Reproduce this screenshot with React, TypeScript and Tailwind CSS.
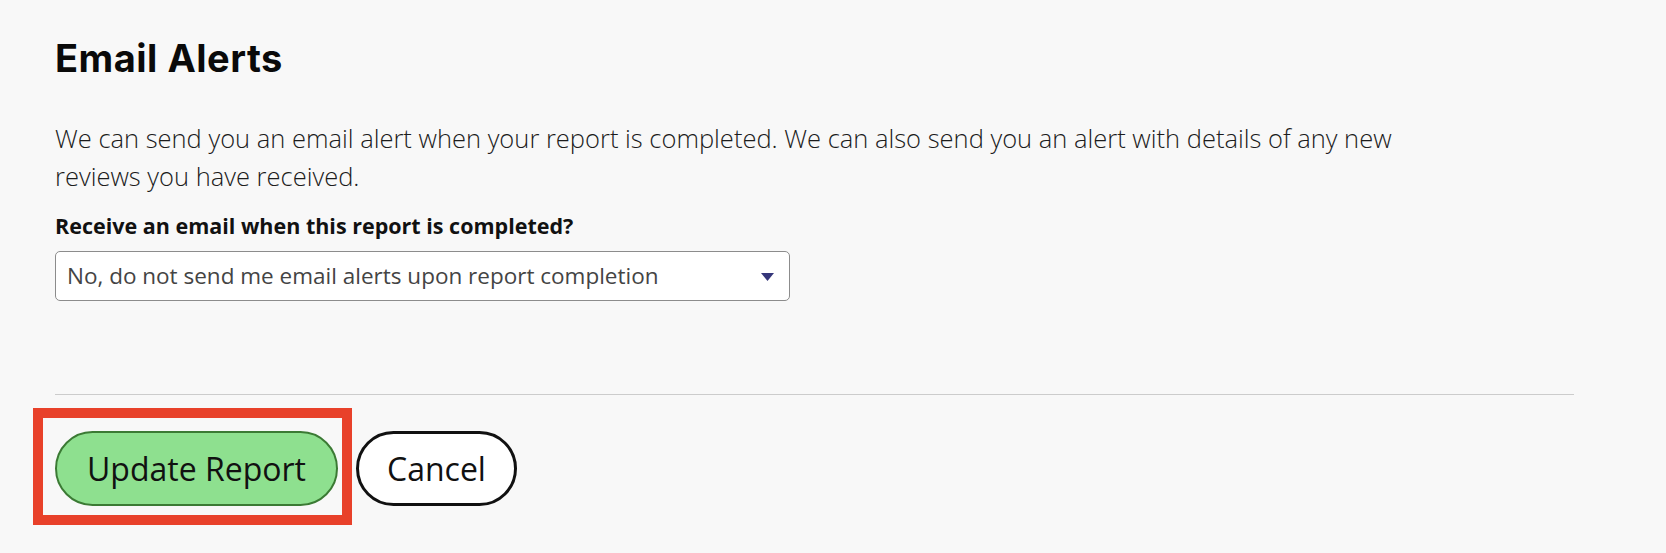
import { useState } from 'react';

export default function App() {
  const [choice, setChoice] = useState('no');

  return (
    <div className="min-h-[553px] w-full bg-[#f8f8f8] pl-[55px] pt-[35px] font-['Open_Sans',sans-serif]">
      {/* Heading */}
      <h2 className="font-['Inter',sans-serif] text-[38px] leading-[46px] font-bold tracking-[0.5px] text-[#0a0a0a]">
        Email Alerts
      </h2>

      {/* Description */}
      <p className="mt-[39px] max-w-[1420px] text-[25.5px] leading-[37.5px] font-light text-[#1c1c1c]">
        We can send you an email alert when your report is completed. We can also send you an alert with details of any new reviews you have received.
      </p>

      {/* Select */}
      <label className="mt-[17px] block text-[21.5px] leading-[28px] font-bold text-[#111]">
        Receive an email when this report is completed?
      </label>
      <div className="relative mt-[11px] w-[735px]">
        <select
          value={choice}
          onChange={(e) => setChoice(e.target.value)}
          className="h-[50px] w-full appearance-none rounded-[5px] border border-[#8c8c8c] bg-white pl-[11px] pr-10 text-[22.5px] text-[#444] outline-none"
        >
          <option value="no">No, do not send me email alerts upon report completion</option>
          <option value="yes">Yes, send me an email alert when the report is completed</option>
        </select>
        <svg
          className="pointer-events-none absolute right-[16px] top-[22px]"
          width="13"
          height="8"
          viewBox="0 0 13 8"
        >
          <path d="M0 0 L13 0 L6.5 8 Z" fill="#35367a" />
        </svg>
      </div>

      <div className="mt-[93px] h-px w-[1519px] bg-[#cccccc]" />

      {/* Actions */}
      <div className="mt-[36px] flex items-center gap-[18px]">
        <div className="relative">
          <button className="h-[75px] rounded-full border-2 border-[#3b7a34] bg-[#8ee08f] px-[30px] text-[32px] text-[#111]">
            Update Report
          </button>
          <div className="pointer-events-none absolute -left-[22px] -top-[23px] -right-[14px] -bottom-[19px] border-[10px] border-[#e8412a]" />
        </div>
        <button className="h-[75px] rounded-full border-[3px] border-[#111] bg-white px-[28px] text-[32px] text-[#111]">
          Cancel
        </button>
      </div>
    </div>
  );
}
